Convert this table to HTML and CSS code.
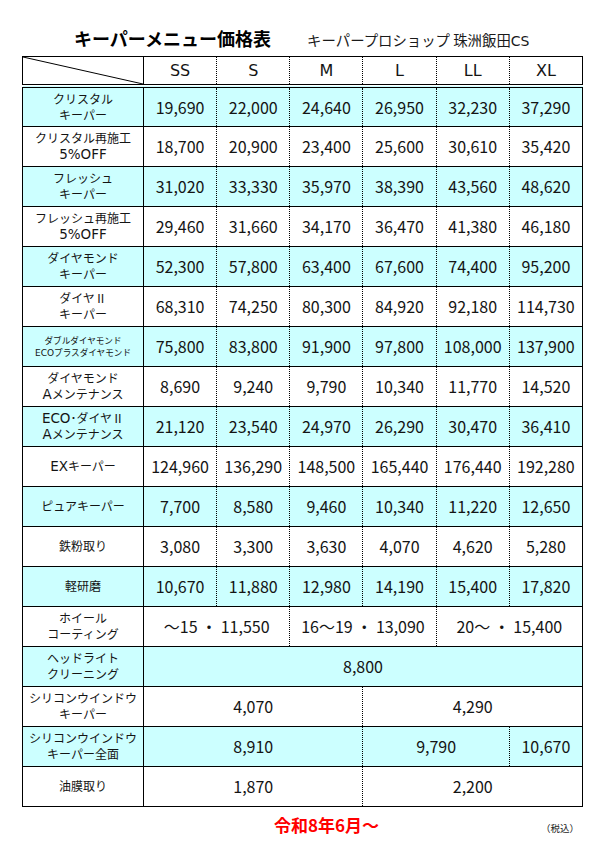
FILE: index.html
```html
<!DOCTYPE html>
<html lang="ja">
<head>
<meta charset="utf-8">
<title>キーパーメニュー価格表</title>
<link rel="stylesheet" href="styles.css">
</head>
<body>
<div class="page">
  <header class="head">
    <h1 class="title">キーパーメニュー価格表</h1>
    <p class="shop">キーパープロショップ 珠洲飯田<span class="lat">CS</span></p>
  </header>
  <table class="price">
    <colgroup><col class="c-name"><col class="c-size" span="6"></colgroup>
    <thead>
      <tr>
        <th class="corner"><svg class="diag" viewBox="0 0 100 100" preserveAspectRatio="none"><line x1="0" y1="0" x2="100" y2="100" stroke="#000" stroke-width="1" vector-effect="non-scaling-stroke"/></svg></th>
        <th>SS</th><th>S</th><th>M</th><th>L</th><th>LL</th><th>XL</th>
      </tr>
    </thead>
    <tbody>
      <tr class="cy"><th>クリスタル<br>キーパー</th><td>19,690</td><td>22,000</td><td>24,640</td><td>26,950</td><td>32,230</td><td>37,290</td></tr>
      <tr><th>クリスタル再施工<br><span class="lat">5%OFF</span></th><td>18,700</td><td>20,900</td><td>23,400</td><td>25,600</td><td>30,610</td><td>35,420</td></tr>
      <tr class="cy"><th>フレッシュ<br>キーパー</th><td>31,020</td><td>33,330</td><td>35,970</td><td>38,390</td><td>43,560</td><td>48,620</td></tr>
      <tr><th>フレッシュ再施工<br><span class="lat">5%OFF</span></th><td>29,460</td><td>31,660</td><td>34,170</td><td>36,470</td><td>41,380</td><td>46,180</td></tr>
      <tr class="cy"><th>ダイヤモンド<br>キーパー</th><td>52,300</td><td>57,800</td><td>63,400</td><td>67,600</td><td>74,400</td><td>95,200</td></tr>
      <tr><th>ダイヤⅡ<br>キーパー</th><td>68,310</td><td>74,250</td><td>80,300</td><td>84,920</td><td>92,180</td><td>114,730</td></tr>
      <tr class="cy"><th class="tiny">ダブルダイヤモンド<br><span class="lat">ECO</span>プラスダイヤモンド</th><td>75,800</td><td>83,800</td><td>91,900</td><td>97,800</td><td>108,000</td><td>137,900</td></tr>
      <tr><th>ダイヤモンド<br><span class="lat">A</span>メンテナンス</th><td>8,690</td><td>9,240</td><td>9,790</td><td>10,340</td><td>11,770</td><td>14,520</td></tr>
      <tr class="cy"><th><span class="lat">ECO</span>･ダイヤⅡ<br><span class="lat">A</span>メンテナンス</th><td>21,120</td><td>23,540</td><td>24,970</td><td>26,290</td><td>30,470</td><td>36,410</td></tr>
      <tr><th><span class="lat">EX</span>キーパー</th><td>124,960</td><td>136,290</td><td>148,500</td><td>165,440</td><td>176,440</td><td>192,280</td></tr>
      <tr class="cy"><th>ピュアキーパー</th><td>7,700</td><td>8,580</td><td>9,460</td><td>10,340</td><td>11,220</td><td>12,650</td></tr>
      <tr><th>鉄粉取り</th><td>3,080</td><td>3,300</td><td>3,630</td><td>4,070</td><td>4,620</td><td>5,280</td></tr>
      <tr class="cy"><th>軽研磨</th><td>10,670</td><td>11,880</td><td>12,980</td><td>14,190</td><td>15,400</td><td>17,820</td></tr>
      <tr><th>ホイール<br>コーティング</th><td colspan="2">～15 ・ 11,550</td><td colspan="2">16～19 ・ 13,090</td><td colspan="2">20～ ・ 15,400</td></tr>
      <tr class="cy"><th>ヘッドライト<br>クリーニング</th><td colspan="6">8,800</td></tr>
      <tr><th>シリコンウインドウ<br>キーパー</th><td colspan="3">4,070</td><td colspan="3">4,290</td></tr>
      <tr class="cy"><th>シリコンウインドウ<br>キーパー全面</th><td colspan="3">8,910</td><td colspan="2">9,790</td><td>10,670</td></tr>
      <tr><th>油膜取り</th><td colspan="3">1,870</td><td colspan="3">2,200</td></tr>
    </tbody>
  </table>
  <footer class="foot">
    <p class="since">令和8年6月～</p>
    <p class="tax">（税込）</p>
  </footer>
</div>
</body>
</html>
```
FILE: styles.css
```css
* { box-sizing: border-box; }
html, body { margin: 0; padding: 0; background: #fff; }
body {
  font-family: "Noto Sans CJK JP", "Noto Sans", sans-serif;
  color: #141414;
}
.page {
  width: 605px;
  padding: 26px 0 0 22px;
}
.head {
  display: flex;
  align-items: baseline;
  gap: 36px;
  padding-left: 52px;
  height: 30px;
}
.title {
  margin: 0;
  font-size: 18px;
  font-weight: 700;
  line-height: 24px;
  color: #000;
}
.shop {
  margin: 0;
  font-size: 14.4px;
  line-height: 24px;
  color: #1a1a1a;
}
.shop .lat {
  font-family: "DejaVu Sans", "Noto Sans", sans-serif;
  font-size: 14px;
}
.price {
  border-collapse: collapse;
  table-layout: fixed;
  width: 561px;
  border: 1px solid #000;
}
.c-name { width: 121px; }
.price th, .price td {
  padding: 0;
  text-align: center;
  vertical-align: middle;
  border-top: 1px solid #000;
  border-bottom: 1px solid #000;
  border-left: 1px dotted #000;
  border-right: 1px dotted #000;
}
.price thead th {
  height: 28px;
  font-family: "DejaVu Sans", "Noto Sans", sans-serif;
  font-size: 16px;
  font-weight: 400;
  line-height: 20px;
  border-bottom: 4px double #000;
}
.price thead th.corner {
  border-right: 1px solid #000;
  border-left: 1px solid #000;
}
.diag {
  display: block;
  width: 100%;
  height: 27px;
}
.price tbody tr { height: 40px; }
.price tbody th {
  font-size: 12px;
  font-weight: 400;
  line-height: 16px;
  border-right: 1px solid #000;
  border-left: 1px solid #000;
}
.price tbody th .lat {
  font-family: "DejaVu Sans", "Noto Sans", sans-serif;
  font-size: 13.5px;
}
.price tbody th.tiny {
  font-size: 8.6px;
  line-height: 12px;
}
.price tbody th.tiny .lat {
  font-size: 9px;
}
.price td {
  font-size: 16px;
  line-height: 20px;
}
.cy th, .cy td { background: #ccffff; }
.foot {
  width: 561px;
  display: flex;
  justify-content: space-between;
  align-items: baseline;
  padding: 6px 4px 0 252px;
}
.since {
  margin: 0;
  color: #ff0000;
  font-size: 17px;
  font-weight: 700;
  line-height: 24px;
}
.tax {
  margin: 0;
  font-size: 9.5px;
  line-height: 12px;
  color: #1a1a1a;
}
```
